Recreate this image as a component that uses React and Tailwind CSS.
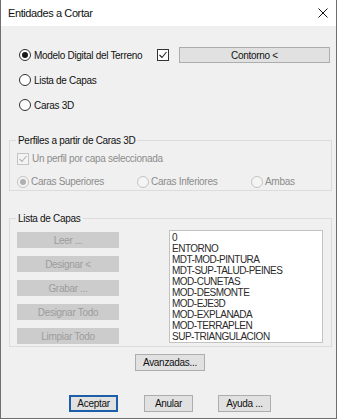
import React from "react";

const Radio = ({ checked, disabled }) => (
  <span
    className={`w-[12px] h-[12px] shrink-0 rounded-full border flex items-center justify-center ${
      disabled ? "border-[#c4c4c4] bg-[#f4f4f4]" : "border-[#333333] bg-white"
    }`}
  >
    {checked && (
      <span
        className={`w-[6px] h-[6px] rounded-full ${
          disabled ? "bg-[#b0b0b0]" : "bg-[#1a1a1a]"
        }`}
      />
    )}
  </span>
);

const Check = ({ disabled }) => (
  <span
    className={`w-[12px] h-[12px] shrink-0 border flex items-center justify-center ${
      disabled ? "border-[#c4c4c4] bg-[#f4f4f4]" : "border-[#333333] bg-white"
    }`}
  >
    <svg width="10" height="10" viewBox="0 0 10 10">
      <polyline
        points="1.5,5 4,7.5 8.5,2"
        fill="none"
        stroke={disabled ? "#b0b0b0" : "#222"}
        strokeWidth="1.1"
      />
    </svg>
  </span>
);

const Btn = ({ children, className = "" }) => (
  <div
    className={`flex items-center justify-center shrink-0 border border-[#adadad] bg-[#e1e1e1] text-[#111] ${className}`}
  >
    {children}
  </div>
);

const OffBtn = ({ children }) => (
  <div className="h-[16px] w-[102px] flex items-center justify-center bg-[#cccccc] text-[#9c9c9c]">
    {children}
  </div>
);

const layers = [
  "0",
  "ENTORNO",
  "MDT-MOD-PINTURA",
  "MDT-SUP-TALUD-PEINES",
  "MOD-CUNETAS",
  "MOD-DESMONTE",
  "MOD-EJE3D",
  "MOD-EXPLANADA",
  "MOD-TERRAPLEN",
  "SUP-TRIANGULACION",
];

export default function App() {
  return (
    <div className="w-[337px] h-[419px] bg-[#f0f0f0] border-x border-b border-[#6f6f6f] flex flex-col text-[10px] leading-[13px] tracking-[-0.3px] whitespace-nowrap text-[#111] font-['Liberation_Sans',Arial,sans-serif]">
      {/* Title bar */}
      <div className="h-[26px] shrink-0 bg-white flex items-center justify-between pl-[7px] pr-[8px]">
        <span className="text-[11px] tracking-[-0.4px]">Entidades a Cortar</span>
        <svg width="10" height="10" viewBox="0 0 10 10">
          <path d="M0.5 0.5 L9.5 9.5 M9.5 0.5 L0.5 9.5" stroke="#111" strokeWidth="1" />
        </svg>
      </div>

      {/* Source options */}
      <div className="flex items-center h-[16px] shrink-0 mt-[21px] pl-[18px]">
        <div className="flex items-center gap-[3px] w-[138px]">
          <Radio checked />
          <span>Modelo Digital del Terreno</span>
        </div>
        <Check />
        <Btn className="h-[16px] w-[151px] ml-[10px]">Contorno &lt;</Btn>
      </div>
      <div className="flex items-center gap-[3px] h-[16px] shrink-0 mt-[9px] pl-[18px]">
        <Radio />
        <span>Lista de Capas</span>
      </div>
      <div className="flex items-center gap-[3px] h-[16px] shrink-0 mt-[9px] pl-[18px]">
        <Radio />
        <span>Caras 3D</span>
      </div>

      {/* Perfiles a partir de Caras 3D */}
      <div className="ml-[8px] w-[323px] h-[51px] shrink-0 mt-[27px] border border-[#dcdcdc]">
        <div className="-mt-[7px] ml-[6px] px-[2px] w-fit bg-[#f0f0f0]">
          Perfiles a partir de Caras 3D
        </div>
        <div className="flex items-center gap-[3px] h-[13px] mt-[5px] pl-[7px] text-[#8c8c8c]">
          <Check disabled />
          <span>Un perfil por capa seleccionada</span>
        </div>
        <div className="flex items-center h-[13px] mt-[10px] pl-[7px] text-[#8c8c8c]">
          <div className="flex items-center gap-[2px] w-[120px]">
            <Radio checked disabled />
            <span>Caras Superiores</span>
          </div>
          <div className="flex items-center gap-[2px] w-[114px]">
            <Radio disabled />
            <span>Caras Inferiores</span>
          </div>
          <div className="flex items-center gap-[2px]">
            <Radio disabled />
            <span>Ambas</span>
          </div>
        </div>
      </div>

      {/* Lista de Capas */}
      <div className="ml-[8px] w-[323px] h-[129px] shrink-0 mt-[27px] border border-[#dcdcdc]">
        <div className="-mt-[7px] ml-[6px] px-[2px] w-fit bg-[#f0f0f0]">Lista de Capas</div>
        <div className="flex items-start pl-[7px]">
          <div className="flex flex-col gap-[8px] mt-[7px]">
            <OffBtn>Leer ...</OffBtn>
            <OffBtn>Designar &lt;</OffBtn>
            <OffBtn>Grabar ...</OffBtn>
            <OffBtn>Designar Todo</OffBtn>
            <OffBtn>Limpiar Todo</OffBtn>
          </div>
          <div className="ml-[50px] mt-[5px] w-[154px] h-[113px] bg-white border border-[#c2c2c2] pl-[2px] pt-[1px] overflow-hidden text-[#2a2a2a] tracking-[-0.5px]">
            {layers.map((l) => (
              <div key={l} className="leading-[11px]">
                {l}
              </div>
            ))}
          </div>
        </div>
      </div>

      <div className="flex pl-[134px] mt-[7px] shrink-0">
        <Btn className="h-[17px] w-[70px]">Avanzadas...</Btn>
      </div>

      {/* Dialog buttons */}
      <div className="flex items-center pl-[68px] mt-[24px] shrink-0">
        <div className="h-[17px] w-[49px] flex items-center justify-center border-2 border-[#1c5fa8] bg-[#e1e1e1]">
          Aceptar
        </div>
        <Btn className="h-[17px] w-[49px] ml-[26px]">Anular</Btn>
        <Btn className="h-[17px] w-[53px] ml-[25px]">Ayuda ...</Btn>
      </div>
    </div>
  );
}
